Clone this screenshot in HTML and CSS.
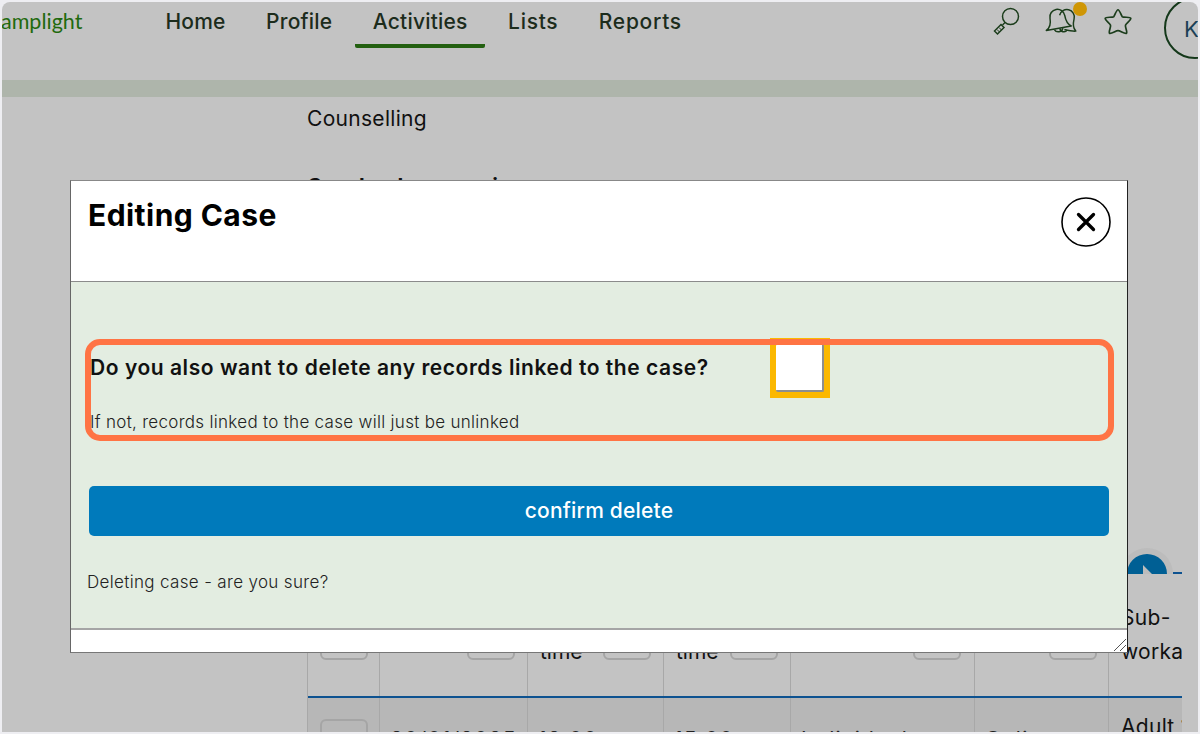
FILE: index.html
```html
<!DOCTYPE html>
<html lang="en">
<head>
<meta charset="utf-8">
<title>Editing Case</title>
<link rel="stylesheet" href="styles.css">
</head>
<body>
<div class="frame">
  <header class="topbar">
    <div class="logo">amplight</div>
    <nav class="nav">
      <a class="nav-item">Home</a>
      <a class="nav-item">Profile</a>
      <a class="nav-item active">Activities</a>
      <a class="nav-item wide">Lists</a>
      <a class="nav-item wide">Reports</a>
    </nav>
    <div class="tools">
      <svg class="tool search" width="30" height="30" viewBox="0 0 30 30" fill="none" stroke="#1c3d1c" stroke-width="1.5"><circle cx="18.500" cy="10.500" r="8"/><path d="M13 16.500l-2.500 2.500"/><path d="M2.500 25L9 18.500l3 3L5.500 28z"/><path d="M5 23.500l2.500 2.500M7 21.500l2.500 2.500" stroke-width="1"/></svg>
      <span class="bell">
        <svg width="34" height="30" viewBox="0 0 34 30" fill="none" stroke="#1c3d1c" stroke-width="1.300" stroke-linejoin="round">
          <g transform="translate(12 13) rotate(-10) scale(1.150)"><path d="M-11 9c4-2 5-5 5-10a6.500 6.500 0 0 1 13 0c0 5 1 8 4 10z"/><path d="M-4 9.500a4 4 0 0 0 7.500 0"/></g>
          <g transform="translate(21 13) rotate(14) scale(1.150)"><path d="M-6-1a6.500 6.500 0 0 1 13 0c0 5 1 8 4 10-3 1-7 1-10 1"/><path d="M-3 10a3.500 3.500 0 0 0 6.500 0"/></g>
        </svg>
        <span class="dot"></span>
      </span>
      <svg class="tool star" width="32" height="32" viewBox="0 0 30 30" fill="none" stroke="#1c3d1c" stroke-width="1.600" stroke-linejoin="round"><path d="M15 3.500c1.500 0 3 5.500 4 6.500 1.500 1 7.500 0 8 1.500.5 1.500-4.500 5-5 6.500-.5 1.500 2 6.500 1 7.500-1.500 1-6-2.500-8-2.500s-6.500 3.500-8 2.500c-1-1 1.500-6 1-7.500-.5-1.500-5.500-5-5-6.500.5-1.500 6.500-.5 8-1.500 1-1 2.500-6.500 4-6.500z"/></svg>
      <div class="avatar">K</div>
    </div>
  </header>
  <div class="strip"></div>
  <main class="content">
    <p class="service">Counselling</p>
    <p class="section-title">Caseload summaries</p>
    <div class="table">
      <div class="row head">
        <div class="cell c1"><span class="box"></span></div>
        <div class="cell c2"><span class="box"></span></div>
        <div class="cell c3"><span class="cell-text">time</span><span class="box"></span></div>
        <div class="cell c4"><span class="cell-text">time</span><span class="box"></span></div>
        <div class="cell c5"><span class="box"></span></div>
        <div class="cell c6"><span class="box"></span></div>
        <div class="cell c7"><span class="wrap-text">Sub-<br>worka</span></div>
      </div>
      <div class="row alt">
        <div class="cell c1"><span class="box"></span></div>
        <div class="cell c2"><span class="cut">30/01/2025</span></div>
        <div class="cell c3"><span class="cut">12:00</span></div>
        <div class="cell c4"><span class="cut">15:00</span></div>
        <div class="cell c5"><span class="cut">Individual</span></div>
        <div class="cell c6"><span class="cut">Online</span></div>
        <div class="cell c7"><span class="adult">Adult 1</span></div>
      </div>
    </div>
    <svg class="round-btn" width="62" height="30" viewBox="0 0 62 30"><path d="M1 26a26 26 0 0 1 52 0z" fill="#bcbcbc"/><path d="M7 26a20 20 0 0 1 40 0H32L23 17V26z" fill="#005f94"/><path d="M53 25H62" stroke="#0d5290" stroke-width="2"/></svg>
  </main>

  <section class="modal">
    <div class="modal-head">
      <h2>Editing Case</h2>
      <button class="close" aria-label="Close">
        <svg width="50" height="50" viewBox="0 0 50 50" fill="none" stroke="#000"><circle cx="25" cy="25" r="24" stroke-width="1.600"/><path d="M17.500 17.500l15 15M32.500 17.500l-15 15" stroke-width="3.300" stroke-linecap="round"/></svg>
      </button>
    </div>
    <div class="modal-body">
      <div class="question">
        <label class="q-label">Do you also want to delete any records linked to the case?</label>
        <span class="check"><span class="check-inner"></span></span>
      </div>
      <p class="hint">If not, records linked to the case will just be unlinked</p>
      <button class="confirm">confirm delete</button>
      <p class="sure">Deleting case - are you sure?</p>
    </div>
    <div class="modal-foot">
      <svg class="grip" width="14" height="14" viewBox="0 0 14 14" stroke="#555" stroke-width="1"><path d="M1 13L13 1M7 13l6-6"/></svg>
    </div>
  </section>
  <div class="highlight"></div>
</div>
</body>
</html>
```
FILE: styles.css
```css
* { box-sizing: border-box; }
html, body { margin: 0; height: 100%; }
body { background: #eeeef2; font-family: "Inter", "Liberation Sans", sans-serif; overflow: hidden; }
.frame { position: absolute; left: 2px; top: 2px; width: 1196px; height: 730px; background: #c3c3c3; overflow: hidden; border-radius: 8px 8px 0 0; color: #111; }
.topbar { height: 78px; display: flex; position: relative; }
.logo { width: 147px; margin-left: -1px; padding-top: 6px; color: #1f6a0e; font-family: "Lato", sans-serif; font-size: 21.500px; line-height: 26px; }
.nav { display: flex; }
.nav-item { height: 46px; padding: 6px 17.500px 0; margin-right: 5.500px; font-size: 21px; line-height: 28px; font-weight: 500; letter-spacing: 0.200px; color: #1c2c1c; }
.nav-item.wide { letter-spacing: 0.700px; }
.nav-item.active { border-bottom: 4px solid #236010; border-radius: 0 0 2px 2px; }
.tools { position: absolute; left: 988px; top: 0; width: 208px; height: 78px; }
.tool, .bell { position: absolute; }
.search { left: 2px; top: 4px; }
.bell { left: 55px; top: 3px; width: 34px; height: 30px; }
.bell svg { display: block; }
.dot { position: absolute; left: 28px; top: -3px; width: 14px; height: 14px; border-radius: 50%; background: #cf9605; }
.star { left: 112px; top: 4px; }
.avatar { position: absolute; left: 174px; top: -5px; width: 62px; height: 62px; border: 2px solid #14381a; border-radius: 50%; font-size: 22px; line-height: 60px; padding-left: 18px; color: #1b3f55; }
.strip { height: 17px; background: #aeb5ab; }
.content { padding-left: 305px; position: relative; }
.service { margin: 9px 0 0; font-size: 21px; line-height: 26px; letter-spacing: 0.300px; }
.section-title { margin: 42px 0 0; font-size: 21px; line-height: 26px; font-weight: 700; white-space: nowrap; }
.table { margin-top: 395px; width: 875px; border-left: 1px solid #a8a8a8; }
.row { display: flex; height: 103px; border-bottom: 2px solid #0d5290; }
.row.alt { background: #b7b7b7; border-bottom: 0; }
.cell { position: relative; border-right: 1px solid #a8a8a8; font-size: 21px; line-height: 34px; }
.c1 { width: 72px; } .c2 { width: 148px; } .c3 { width: 136px; } .c4 { width: 127px; } .c5 { width: 184px; } .c6 { width: 134px; } .c7 { width: 73px; border-right: 0; overflow: hidden; }
.box { position: absolute; left: 12px; top: 38px; width: 48px; height: 27px; border: 2px solid #a5a5a5; border-radius: 6px; }
.c2 .box { left: 87px; } .c3 .box { left: 75px; } .c4 .box { left: 66px; } .c5 .box { left: 122px; } .c6 .box { left: 74px; }
.row.alt .box { top: 21px; }
.cell-text { position: absolute; left: 12px; top: 40px; }
.wrap-text { position: absolute; left: 12px; top: 6px; line-height: 34px; white-space: nowrap; letter-spacing: 0.300px; }
.cut { position: absolute; left: 10px; top: 25px; white-space: nowrap; color: #222; letter-spacing: 1.200px; }
.adult { position: absolute; left: 12px; top: 12px; white-space: nowrap; letter-spacing: 0.300px; }
.round-btn { position: absolute; left: 1118px; top: 442px; }
.modal { position: absolute; left: 68px; top: 178px; width: 1058px; height: 473px; background: #fff; border: 1px solid #333; border-color: #888 #222 #777 #666; }
.modal-head { height: 101px; display: flex; justify-content: space-between; padding: 15px 16px 0 17px; border-bottom: 1px solid #8b8b8b; }
.modal-head h2 { margin: 0; font-size: 30px; line-height: 38px; font-weight: 700; letter-spacing: 0.450px; color: #000; }
.close { width: 50px; height: 50px; padding: 0; margin-top: 1px; border: 0; background: none; }
.close svg { display: block; }
.modal-body { height: 348px; background: #e3ede1; padding: 0 18px; border-bottom: 2px solid #a5a5a5; }
.question { display: flex; align-items: flex-start; padding-top: 56px; }
.q-label { margin: 17px 0 0 1px; width: 680px; font-size: 21px; line-height: 26px; font-weight: 600; letter-spacing: 0.550px; color: #111; }
.check { width: 60px; height: 60px; padding: 6px; background: #fbb800; }
.check-inner { display: block; width: 48px; height: 48px; background: #fff; border-right: 2px solid #8e8e8e; border-bottom: 2px solid #8e8e8e; border-radius: 2px; }
.hint { margin: 13px 0 0 1px; font-size: 17px; line-height: 22px; font-weight: 300; letter-spacing: 0.300px; color: #222; }
.confirm { display: block; width: 1020px; height: 50px; margin: 53px 0 0; padding: 0 0 2px; border: 0; border-radius: 5px; background: #007abb; color: #fff; font: 500 21px "Inter", "Liberation Sans", sans-serif; letter-spacing: 0.200px; }
.sure { margin: 35px 0 0 -2px; font-size: 17px; line-height: 22px; font-weight: 300; letter-spacing: 0.340px; color: #222; }
.modal-foot { position: relative; height: 22px; }
.grip { position: absolute; right: 0; bottom: 0; }
.highlight { position: absolute; left: 83px; top: 337px; width: 1029px; height: 102px; border: 6px solid #ff7444; border-radius: 15px; pointer-events: none; }
```
